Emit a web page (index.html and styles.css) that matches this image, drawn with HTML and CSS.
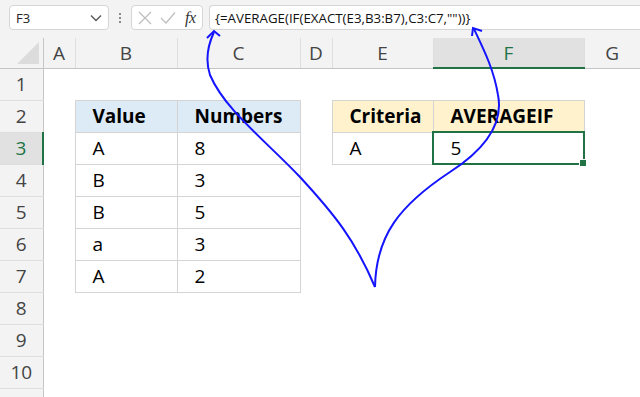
FILE: index.html
```html
<!DOCTYPE html>
<html>
<head>
<meta charset="utf-8">
<link rel="stylesheet" href="styles.css">
</head>
<body>
<div class="app">
  <div class="toolbar">
    <div class="namebox">
      <span class="ref">F3</span>
      <svg class="chev" width="12" height="8" viewBox="0 0 12 8"><path d="M1 1.5 L6 6.5 L11 1.5" fill="none" stroke="#555" stroke-width="1.3"/></svg>
    </div>
    <div class="dots"><i></i><i></i><i></i></div>
    <div class="fxbox">
      <svg width="14" height="14" viewBox="0 0 14 14"><path d="M1 1 L13 13 M13 1 L1 13" stroke="#bdbdbd" stroke-width="1.2" fill="none"/></svg>
      <svg width="16" height="14" viewBox="0 0 16 14"><path d="M1 7 L6 12 L15 1.5" stroke="#bdbdbd" stroke-width="1.2" fill="none"/></svg>
      <span class="fx">fx</span>
    </div>
    <div class="formula">{=AVERAGE(IF(EXACT(E3,B3:B7),C3:C7,""))}</div>
  </div>
  <table class="sheet">
    <colgroup>
      <col class="c-rh"><col class="c-a"><col class="c-b"><col class="c-c"><col class="c-d"><col class="c-e"><col class="c-f"><col class="c-g">
    </colgroup>
    <thead>
      <tr class="colhead">
        <th class="corner"><span class="tri"></span></th>
        <th>A</th><th>B</th><th>C</th><th>D</th><th>E</th><th class="sel">F</th><th>G</th>
      </tr>
    </thead>
    <tbody>
      <tr><th class="rh">1</th><td></td><td></td><td></td><td></td><td></td><td></td><td></td></tr>
      <tr><th class="rh">2</th><td></td><td class="t hb b">Value</td><td class="t hb b">Numbers</td><td></td><td class="t hy b">Criteria</td><td class="t hy b">AVERAGEIF</td><td></td></tr>
      <tr><th class="rh sel">3</th><td></td><td class="t">A</td><td class="t">8</td><td></td><td class="t">A</td><td class="t active">5<span class="handle"></span></td><td></td></tr>
      <tr><th class="rh">4</th><td></td><td class="t">B</td><td class="t">3</td><td></td><td></td><td></td><td></td></tr>
      <tr><th class="rh">5</th><td></td><td class="t">B</td><td class="t">5</td><td></td><td></td><td></td><td></td></tr>
      <tr><th class="rh">6</th><td></td><td class="t">a</td><td class="t">3</td><td></td><td></td><td></td><td></td></tr>
      <tr><th class="rh">7</th><td></td><td class="t">A</td><td class="t">2</td><td></td><td></td><td></td><td></td></tr>
      <tr><th class="rh">8</th><td></td><td></td><td></td><td></td><td></td><td></td><td></td></tr>
      <tr><th class="rh">9</th><td></td><td></td><td></td><td></td><td></td><td></td><td></td></tr>
      <tr><th class="rh">10</th><td></td><td></td><td></td><td></td><td></td><td></td><td></td></tr>
      <tr><th class="rh"></th><td></td><td></td><td></td><td></td><td></td><td></td><td></td></tr>
    </tbody>
  </table>
  <svg class="arrows" width="640" height="397" viewBox="0 0 640 397">
    <path d="M375 287 C355 240 335 215 300 177 C265 140 225 110 210 75 C205 60 208 45 214 32" fill="none" stroke="#1414ff" stroke-width="2"/>
    <path d="M207 38 L214 31 L220 36" fill="none" stroke="#1414ff" stroke-width="2"/>
    <path d="M375 287 C376 235 400 205 450 172 C490 146 503 120 498 95 C494 70 484 50 474 29" fill="none" stroke="#1414ff" stroke-width="2"/>
    <path d="M472 36 L473 28 L482 31" fill="none" stroke="#1414ff" stroke-width="2"/>
  </svg>
</div>
</body>
</html>
```
FILE: styles.css
```css
* { box-sizing: border-box; }
html, body { margin: 0; padding: 0; }
body { background: #fff; font-family: "Open Sans", "Liberation Sans", sans-serif; }
.app { position: relative; width: 640px; height: 397px; overflow: hidden; }
.toolbar {
  height: 38px; background: #f3f3f3; display: flex; align-items: flex-start;
  padding: 5px 0 0 9px; gap: 0;
}
.namebox {
  width: 100px; height: 25px; background: #fff; border: 1px solid #d6d6d6; border-radius: 4px;
  display: flex; align-items: center; justify-content: space-between; padding: 0 6px 0 6px;
}
.ref { font-size: 13px; color: #222; }
.dots { width: 22px; height: 25px; display: flex; flex-direction: column; align-items: center; justify-content: center; gap: 2px; }
.dots i { width: 2px; height: 2px; background: #8a8a8a; display: block; }
.fxbox {
  width: 72px; height: 25px; background: #fff; border: 1px solid #d6d6d6; border-radius: 4px;
  display: flex; align-items: center; gap: 8px; padding: 0 6px 0 6px;
}
.fx { font-family: "Liberation Serif", serif; font-style: italic; font-size: 16px; color: #333; margin-left: 1px; letter-spacing: -0.5px; }
.formula {
  flex: 1; margin-left: 6px; height: 25px; background: #fff; border: 1px solid #d6d6d6; border-right: none;
  border-radius: 4px 0 0 4px; font-size: 13.3px; color: #111; padding: 3px 0 0 5px; white-space: nowrap;
  font-family: "Open Sans", sans-serif; letter-spacing: 0;
}
.sheet { border-collapse: collapse; table-layout: fixed; width: 640px; }
.c-rh { width: 43px; } .c-a { width: 32px; } .c-b { width: 102px; } .c-c { width: 123px; }
.c-d { width: 32px; } .c-e { width: 101px; } .c-f { width: 151px; } .c-g { width: 56px; }
.colhead th {
  height: 30px; background: #f3f3f3; font-weight: normal; font-size: 19px; color: #444;
  border-left: 1px solid #dedede; border-bottom: 1px solid #c6c6c6; padding: 0; line-height: 28px;
}
.colhead th.sel { background: #e1e1e1; color: #217346; border-bottom: 2px solid #217346; }
.corner { position: relative; border-left: none !important; border-right: 1px solid #c6c6c6; }
.tri {
  position: absolute; right: 4px; bottom: 4px; width: 0; height: 0;
  border-left: 22px solid transparent; border-bottom: 22px solid #dcdcdc;
}
tbody tr { height: 32px; }
th.rh {
  background: #f3f3f3; font-weight: normal; font-size: 19px; color: #444; padding: 0;
  border-bottom: 1px solid #dedede; border-right: 1px solid #c6c6c6; text-align: center;
}
th.rh.sel { background: #e1e1e1; color: #217346; border-right: 2px solid #217346; }
td { padding: 0 0 0 17px; font-size: 19px; color: #000; border: none; }
td.t { border: 1px solid #d4d4d4; }
td.hb { background: #ddebf7; }
td.hy { background: #fff2cc; }
td.b { font-weight: bold; }
td.active { position: relative; outline: 2px solid #217346; outline-offset: -1px; }
.handle { position: absolute; right: -3px; bottom: -3px; width: 6px; height: 6px; background: #217346; border: 1px solid #fff; box-sizing: content-box; }
.arrows { position: absolute; left: 0; top: 0; pointer-events: none; }
```
